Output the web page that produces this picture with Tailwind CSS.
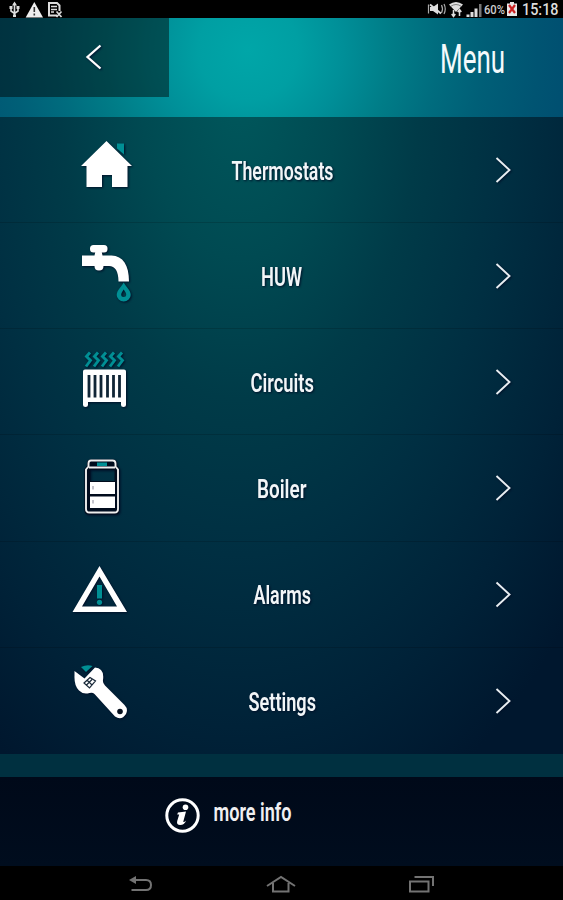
<!DOCTYPE html>
<html lang="en">

<head>
    <meta charset="UTF-8">
    <meta name="viewport" content="width=device-width, initial-scale=1.0">
    <title>Menu</title>
    <script src="https://cdn.jsdelivr.net/npm/@tailwindcss/browser@4"></script>
</head>

<body class="bg-black font-['Roboto',sans-serif] text-white overflow-hidden">
    <div class="w-[563px] h-[900px] flex flex-col">

        <!-- Status bar -->
        <div class="h-[18px] shrink-0 flex justify-between bg-black">
            <svg class="w-[70px] h-[18px]" viewBox="0 0 70 18" fill="none" stroke="#ddd">
                <path d="M14.500 3v14M11 7v4l3.500 2.500L18 11V7" stroke-width="1.600" />
                <path d="M14.500 1.500l2.500 4h-5z" fill="#ddd" stroke="none" />
                <path d="M9.500 6h3v3h-3zM16.500 6h3v3h-3zM13 14.500h3v2.500h-3z" fill="#ddd" stroke="none" />
                <path d="M34.300 2L43 17.500H25.700z" fill="#eee" stroke="none" />
                <path d="M34.300 7v5M34.300 13.500v2" stroke="#333" stroke-width="1.600" />
                <path d="M57 15.500h-8V3h8l2.500 2.500V11" stroke-width="2" />
                <path d="M51 6.500h6M51 9.500h6M51 12h3" stroke-width="1.700" />
                <path d="M56.500 11.500l5 5.500M61.500 11.500l-5 5.500" stroke-width="1.700" />
            </svg>
            <svg class="w-[143px] h-[18px]" viewBox="420 0 143 18" fill="none" stroke="#ddd">
                <path d="M428.500 4.500v9M441.500 5q2 4 0 8M444 4q2.500 5 0 10" stroke-width="1.200" stroke="#aaa" />
                <path d="M430 7h3l5-3.500v11L433 11h-3z" fill="#ddd" stroke="none" />
                <path d="M430 4.500l11 9" stroke-width="1.800" />
                <path d="M449 4.500q7-5 14 0L456 12z" fill="#ddd" stroke="none" />
                <path d="M450.500 6.500q5.500-4 11 0" stroke="#555" stroke-width=".7" />
                <path d="M453.500 10v6M451.700 14l1.800 2.500 1.800-2.500M459.500 16v-6M457.700 12l1.800-2.500 1.800 2.500" stroke-width="1.500" />
                <path d="M466.500 17v-2.500h3V17zM470.500 17v-5h3v5zM474.500 17V8.500h3V17z" fill="#ddd" stroke="none" />
                <path d="M479 17V4h2.500v13z" fill="#777" stroke="none" />
                <text x="484" y="13.500" font-size="12.500" font-weight="500" textLength="21" lengthAdjust="spacingAndGlyphs" fill="#ccc" stroke="none">60%</text>
                <path d="M507 3.500h3V2h4v1.500h3V16h-10z" fill="#e8e8e8" stroke="none" />
                <path d="M509 5l6 8M515 5l-6 8" stroke="#c22" stroke-width="2.200" />
                <text x="522" y="14.500" font-size="16.500" font-weight="500" textLength="36.500" lengthAdjust="spacingAndGlyphs" fill="#ddd" stroke="none">15:18</text>
            </svg>
        </div>

        <!-- Header -->
        <div class="h-[99px] shrink-0 flex justify-between bg-[radial-gradient(circle_340px_at_248px_32px,#00a6a8_0px,#009fa3_50px,#008f98_95px,#007c87_145px,#006c7e_190px,#005f77_235px,#005472_290px,#004c70_340px)]">
            <div class="w-[169px] h-[79px] bg-black/45">
                <svg class="w-[169px] h-[79px] drop-shadow-[1px_1px_1px_#001030]" viewBox="0 18 169 79" fill="none" stroke="#fff" stroke-width="2.300">
                    <path d="M100.500 45.500L87.500 57l13 11.500" />
                </svg>
            </div>
            <svg class="w-[163px] h-[99px]" viewBox="400 18 163 99">
                <text x="440" y="73" font-size="40" font-weight="400" textLength="65" lengthAdjust="spacingAndGlyphs" fill="#f4fafc">Menu</text>
            </svg>
        </div>

        <!-- Menu items -->
        <div class="h-[637px] shrink-0 grid grid-rows-6 divide-y divide-black/15 bg-[radial-gradient(ellipse_450px_780px_at_240px_-30px,#00585c_0%,#004a52_22%,#003b48_40%,#002f42_60%,#002238_82%,#00172e_100%)]">
            <div class="flex items-center pl-[50px] pr-[40px]">
                <svg class="w-[110px] h-[106px] drop-shadow-[1px_1px_1px_#001028]" viewBox="50 117 110 106">
                    <path d="M117 143.500h7v11l-7-6z" fill="#008f94" />
                    <path d="M106.500 141L132 166h-4.500v21h-15.500v-12h-10v12H86.500v-21H81z" fill="#fff" />
                </svg>
                <svg class="w-[323px] h-[106px] drop-shadow-[1px_1px_1px_#001028]" viewBox="160 117 323 106">
                    <text x="231.500" y="179.500" font-size="26" font-weight="600" textLength="102" lengthAdjust="spacingAndGlyphs" fill="#f2f6f8">Thermostats</text>
                </svg>
                <svg class="w-[40px] h-[106px] drop-shadow-[1px_1px_1px_#001028]" viewBox="483 117 40 106" fill="none" stroke="#e8eef2" stroke-width="1.900">
                    <path d="M496.500 158l13 12-13 12" />
                </svg>
            </div>
            <div class="flex items-center pl-[50px] pr-[40px]">
                <svg class="w-[110px] h-[106px] drop-shadow-[1px_1px_1px_#001028]" viewBox="50 223 110 106">
                    <rect x="90" y="245" width="17.500" height="7.500" rx="3.500" fill="#fff" />
                    <path d="M95.500 251h6l1 4.500h9C123 256 129 265 129 281.500h-10.500C118.500 271 115 266 109 266h-5.500q0 4.500-4.500 4.500T94.500 266H82v-10.500h12.500z" fill="#fff" />
                    <path fill-rule="evenodd" d="M123.700 282.500c2 4 7 7.500 7 12.500a7 6.500 0 0 1-14 0c0-5 5-8.500 7-12.500zm0 7c-1 2-2.500 3-2.500 5a2.500 2.500 0 0 0 5 0c0-2-1.500-3-2.500-5z" fill="#008f94" />
                </svg>
                <svg class="w-[323px] h-[106px] drop-shadow-[1px_1px_1px_#001028]" viewBox="160 223 323 106">
                    <text x="261" y="286" font-size="26" font-weight="600" textLength="41" lengthAdjust="spacingAndGlyphs" fill="#f2f6f8">HUW</text>
                </svg>
                <svg class="w-[40px] h-[106px] drop-shadow-[1px_1px_1px_#001028]" viewBox="483 223 40 106" fill="none" stroke="#e8eef2" stroke-width="1.900">
                    <path d="M496.500 264l13 12-13 12" />
                </svg>
            </div>
            <div class="flex items-center pl-[50px] pr-[40px]">
                <svg class="w-[110px] h-[106px] drop-shadow-[1px_1px_1px_#001028]" viewBox="50 329 110 106">
                    <g fill="none" stroke="#008f94" stroke-width="2.900">
                        <path d="M90 352.500l-3.500 4 4 4-4.500 6" />
                        <path d="M98 352.500l-3.500 4 4 4-4.500 6" />
                        <path d="M106 352.500l-3.500 4 4 4-4.500 6" />
                        <path d="M114 352.500l-3.500 4 4 4-4.500 6" />
                        <path d="M122 352.500l-3.500 4 4 4-4.500 6" />
                    </g>
                    <path d="M85 369.500h39q2 0 2 2V405q0 2-2.500 2t-2.500-2v-3H88v3q0 2-2.500 2T83 405v-33.500q0-2 2-2z" fill="#fff" />
                    <path d="M89 375v22.500M95 375v22.500M101 375v22.500M107.500 375v22.500M113.500 375v22.500M119.500 375v22.500" stroke="#102536" stroke-width="2.800" />
                </svg>
                <svg class="w-[323px] h-[106px] drop-shadow-[1px_1px_1px_#001028]" viewBox="160 329 323 106">
                    <text x="250.500" y="392" font-size="26" font-weight="600" textLength="63.500" lengthAdjust="spacingAndGlyphs" fill="#f2f6f8">Circuits</text>
                </svg>
                <svg class="w-[40px] h-[106px] drop-shadow-[1px_1px_1px_#001028]" viewBox="483 329 40 106" fill="none" stroke="#e8eef2" stroke-width="1.900">
                    <path d="M496.500 370l13 12-13 12" />
                </svg>
            </div>
            <div class="flex items-center pl-[50px] pr-[40px]">
                <svg class="w-[110px] h-[106px] drop-shadow-[1px_1px_1px_#001028]" viewBox="50 435 110 106">
                    <path d="M91 461.500h22q2 0 2 2v3l2.500 3V510q0 2.500-2.500 2.500H89q-2.500 0-2.500-2.500v-40.500l2.500-3v-3q0-2 2-2z" fill="none" stroke="#000b1c" stroke-width="4" />
                    <rect x="91" y="462.500" width="22" height="4" fill="#000b1c" />
                    <rect x="97" y="462.500" width="10" height="3.500" fill="#008f94" />
                    <path d="M89.500 481v-12h26v12" fill="none" stroke="#000b1c" stroke-width="1.800" />
                    <path d="M88.500 481h27v29h-27z" fill="#000b1c" />
                    <path d="M90 482h25v12H90zM90 496.500h25v11.500H90z" fill="#fff" />
                    <path d="M93 486v3.500M93 500v3.500" stroke="#889" />
                    <path d="M91 460.500h21.500q3 0 3 3v3l2.500 3V509q0 3.500-3.500 3.500H89.500q-3.500 0-3.500-3.500v-39.500l2.500-3v-3q0-3 2.500-3zM89 467.500h26" fill="none" stroke="#eee" stroke-width="1.900" />
                </svg>
                <svg class="w-[323px] h-[106px] drop-shadow-[1px_1px_1px_#001028]" viewBox="160 435 323 106">
                    <text x="257" y="498" font-size="26" font-weight="600" textLength="49.500" lengthAdjust="spacingAndGlyphs" fill="#f2f6f8">Boiler</text>
                </svg>
                <svg class="w-[40px] h-[106px] drop-shadow-[1px_1px_1px_#001028]" viewBox="483 435 40 106" fill="none" stroke="#e8eef2" stroke-width="1.900">
                    <path d="M496.500 476l13 12-13 12" />
                </svg>
            </div>
            <div class="flex items-center pl-[50px] pr-[40px]">
                <svg class="w-[110px] h-[106px] drop-shadow-[1px_1px_1px_#001028]" viewBox="50 541 110 106">
                    <path fill-rule="evenodd" d="M99.500 566L127 612H72.500zM99.500 576.500L82 606.500h35z" fill="#fff" />
                    <path d="M97 585h5v13.500h-5z" fill="#008f94" />
                    <circle cx="99.500" cy="602.300" r="2.600" fill="#008f94" />
                </svg>
                <svg class="w-[323px] h-[106px] drop-shadow-[1px_1px_1px_#001028]" viewBox="160 541 323 106">
                    <text x="253.500" y="604" font-size="26" font-weight="600" textLength="57.500" lengthAdjust="spacingAndGlyphs" fill="#f2f6f8">Alarms</text>
                </svg>
                <svg class="w-[40px] h-[106px] drop-shadow-[1px_1px_1px_#001028]" viewBox="483 541 40 106" fill="none" stroke="#e8eef2" stroke-width="1.900">
                    <path d="M496.500 582.500l13 12-13 12" />
                </svg>
            </div>
            <div class="flex items-center pl-[50px] pr-[40px]">
                <svg class="w-[110px] h-[106px] drop-shadow-[1px_1px_1px_#001028]" viewBox="50 648 110 106">
                    <path d="M81 667q6-3 11.500-1L86 672z" fill="#008f94" />
                    <path d="M74.500 675.500V671l10 7.500L95 667.500q4 0 6 2.500 3 3 2 10-.5 3 2 5.500l19.500 19.500q4 4 1.500 9-4.500 7-11 2.500L94.500 694q-2-2-5-1-6 2-10.500-2.500-5-4.500-4.500-15z" fill="#fff" />
                    <circle cx="120" cy="711.500" r="2.800" fill="#07111f" />
                    <path d="M84 683l6-5.500 5.500 3.500-6 7zM87 680l5 5M86 685.500l6-6" fill="none" stroke="#1a2a3a" stroke-width="1.200" />
                </svg>
                <svg class="w-[323px] h-[106px] drop-shadow-[1px_1px_1px_#001028]" viewBox="160 648 323 106">
                    <text x="248.500" y="711" font-size="26" font-weight="600" textLength="67.500" lengthAdjust="spacingAndGlyphs" fill="#f2f6f8">Settings</text>
                </svg>
                <svg class="w-[40px] h-[106px] drop-shadow-[1px_1px_1px_#001028]" viewBox="483 648 40 106" fill="none" stroke="#e8eef2" stroke-width="1.900">
                    <path d="M496.500 689l13 12-13 12" />
                </svg>
            </div>
        </div>

        <div class="h-[23px] shrink-0 bg-[#003040]"></div>

        <!-- More info -->
        <div class="h-[89px] shrink-0 pl-[160px] bg-linear-to-b from-[#000919] to-[#000d1e]">
            <svg class="w-[250px] h-[89px]" viewBox="160 777 250 89">
                <circle cx="182.500" cy="815.500" r="15.700" fill="none" stroke="#fff" stroke-width="3" />
                <circle cx="185.500" cy="807.300" r="2.800" fill="#fff" />
                <path d="M178 812.500l8-1-2.800 10.500q1.500 0 3-1.500-2 4.500-6 4.500-4 0-3-4l2-6.500h-2z" fill="#fff" />
                <text x="213.500" y="821" font-size="25" font-weight="600" textLength="78" lengthAdjust="spacingAndGlyphs" fill="#f0f0f2">more info</text>
            </svg>
        </div>

        <!-- Navigation bar -->
        <div class="h-[34px] shrink-0 bg-black">
            <svg class="w-[563px] h-[34px]" viewBox="0 866 563 34" fill="none" stroke="#737373" stroke-width="2">
                <path d="M134 880h12q5 0 5 5t-5 5h-14.500" />
                <path d="M129 880l7-4v8z" fill="#737373" stroke="none" />
                <path d="M267 886l14-9 14 9M273 883v8.500h15.500V883" />
                <path d="M410 881.500h18.500v10H410zM414.500 877h18.500v9" />
            </svg>
        </div>
    </div>
</body>

</html>
